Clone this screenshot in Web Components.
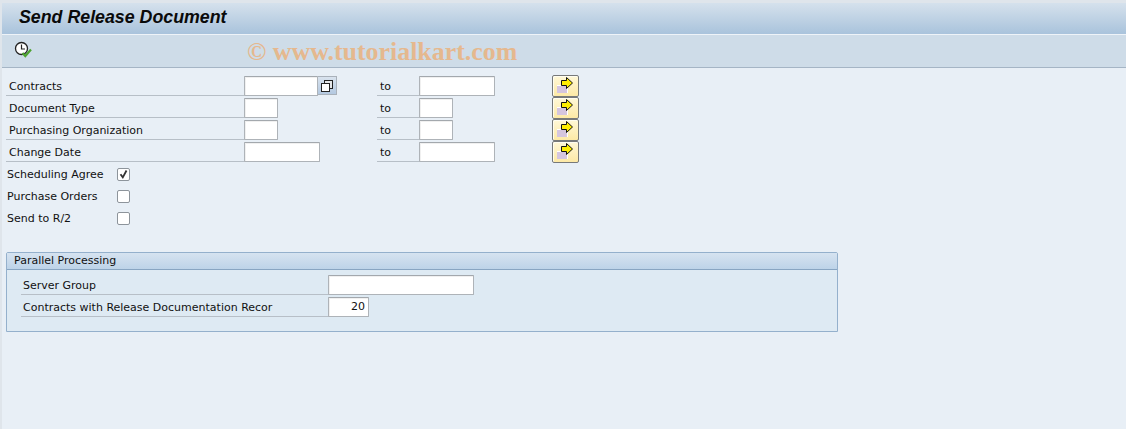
<!DOCTYPE html>
<html>
<head>
<meta charset="utf-8">
<style>
html, body { margin: 0; height: 100%; }
body {
  width: 1126px;
  height: 429px;
  overflow: hidden;
  background: #e8eff6;
  font: 11px "DejaVu Sans", sans-serif;
  color: #111;
}
</style>
</head>
<body>
<sap-screen>
  <sap-title slot="head">Send Release Document</sap-title>
  <sap-toolbar slot="head" mark="© www.tutorialkart.com"></sap-toolbar>

  <sap-range-row label="Contracts" low="74" high="76" multi></sap-range-row>
  <sap-range-row label="Document Type" low="34" high="34"></sap-range-row>
  <sap-range-row label="Purchasing Organization" low="34" high="34"></sap-range-row>
  <sap-range-row label="Change Date" low="76" high="76"></sap-range-row>

  <sap-check-row label="Scheduling Agree" checked></sap-check-row>
  <sap-check-row label="Purchase Orders"></sap-check-row>
  <sap-check-row label="Send to R/2"></sap-check-row>

  <sap-group heading="Parallel Processing">
    <sap-param-row label="Server Group" width="146"></sap-param-row>
    <sap-param-row label="Contracts with Release Documentation Recor" width="41" value="20"></sap-param-row>
  </sap-group>
</sap-screen>

<script>
class SapScreen extends HTMLElement {
  constructor() {
    super();
    this.attachShadow({mode: 'open'});
    this.shadowRoot.innerHTML = `
<style>
:host { display: flex; flex-direction: column; height: 429px; padding: 3px 0 0 2px; box-sizing: border-box; background: #dfe5eb; }
.body { flex: 1; background: #e8eff6; padding: 8px 0 0 4px; display: flex; flex-direction: column; }
</style>
<slot name="head"></slot>
<div class="body"><slot></slot></div>`;
  }
}

class SapTitle extends HTMLElement {
  constructor() {
    super();
    this.attachShadow({mode: 'open'});
    this.shadowRoot.innerHTML = `
<style>
:host {
  display: block;
  height: 32px;
  box-sizing: border-box;
  padding: 4px 0 0 17px;
  background: linear-gradient(#d5e1ec, #a9c3dc);
  border-bottom: 1px solid #eef3f8;
  font: italic bold 17.8px/20px "Liberation Sans", sans-serif;
  color: #0a0a0a;
}
</style>
<slot></slot>`;
  }
}

class SapToolbar extends HTMLElement {
  constructor() {
    super();
    this.attachShadow({mode: 'open'});
    this.shadowRoot.innerHTML = `
<style>
:host {
  display: flex;
  align-items: center;
  height: 33px;
  box-sizing: border-box;
  padding-left: 12px;
  background: #cedce8;
  border-bottom: 1px solid #a5b5c5;
}
svg { width: 18px; height: 18px; flex: none; margin-top: -2px; }
.mark {
  margin-left: 215px;
  font: bold 25.9px "Liberation Serif", serif;
  color: #e5b88e;
  white-space: nowrap;
  margin-top: 1px;
}
</style>
<svg viewBox="0 0 18 18">
  <circle cx="7.5" cy="7.5" r="6" fill="#fff" stroke="#222" stroke-width="1.3"/>
  <path d="M7.5 3.5V8H11" fill="none" stroke="#222" stroke-width="1.2"/>
  <path d="M8.5 12l2.8 3L17 8.5" fill="none" stroke="#4da32f" stroke-width="2.2"/>
</svg>
<span class="mark"></span>`;
    this.shadowRoot.querySelector('.mark').textContent = this.getAttribute('mark');
  }
}

class SapLabel extends HTMLElement {
  constructor() {
    super();
    this.attachShadow({mode: 'open'});
    this.shadowRoot.innerHTML = `
<style>
:host {
  display: block;
  box-sizing: border-box;
  height: 20px;
  padding: 3px 0 0 3px;
  border-bottom: 1px solid #b7bfc7;
  line-height: 16px;
  white-space: nowrap;
  overflow: hidden;
}
</style>
<slot></slot>`;
  }
}

class SapField extends HTMLElement {
  static get observedAttributes() { return ['width']; }

  constructor() {
    super();
    this.attachShadow({mode: 'open'});
    this.shadowRoot.innerHTML = `
<style>
:host {
  display: block;
  flex: none;
  box-sizing: border-box;
  height: 20px;
  background: #fff;
  border: 1px solid #aeb3b8;
  border-top-color: #a3a8ad;
  border-radius: 1px;
  box-shadow: inset 1px 1px 0 #f0f0f0;
  line-height: 18px;
  text-align: right;
  padding-right: 3px;
}
</style>
<slot></slot>`;
  }

  attributeChangedCallback(name, oldValue, value) {
    this.style.width = value + 'px';
  }
}

class SapMultiButton extends HTMLElement {
  constructor() {
    super();
    this.attachShadow({mode: 'open'});
    this.shadowRoot.innerHTML = `
<style>
:host {
  display: flex;
  flex: none;
  align-items: center;
  justify-content: center;
  box-sizing: border-box;
  width: 19px;
  height: 19px;
  background: linear-gradient(#d9e3ee, #b3c8e0);
  border: 1px solid #a9b1ba;
  border-left: 0;
}
svg { width: 12px; height: 12px; }
</style>
<svg viewBox="0 0 12 12">
  <rect x="3.5" y="0.5" width="8" height="8" fill="#e4e6e8" stroke="#222"/>
  <rect x="0.5" y="3.5" width="8" height="8" fill="#fff" stroke="#222"/>
</svg>`;
  }
}

class SapSelectButton extends HTMLElement {
  constructor() {
    super();
    this.attachShadow({mode: 'open'});
    this.shadowRoot.innerHTML = `
<style>
:host {
  display: block;
  box-sizing: border-box;
  width: 27px;
  height: 22px;
  background: linear-gradient(#fff8d8, #fde9a6);
  border: 1px solid #77797a;
  border-radius: 2px;
  box-shadow: inset 1px 1px 0 #fffdf0;
}
svg { display: block; width: 25px; height: 20px; }
</style>
<svg viewBox="0 0 25 20">
  <path d="M4 9H15V17H4Z" fill="#fff"/>
  <rect x="4" y="10" width="10" height="7" fill="#d5c5de"/>
  <path d="M8.5 4.5H13.5V1.5L19.5 7 13.5 12.5V9.5H8.5Z" fill="#ffee00" stroke="#111" stroke-width="1"/>
</svg>`;
  }
}

class SapRangeRow extends HTMLElement {
  constructor() {
    super();
    this.attachShadow({mode: 'open'});
    this.shadowRoot.innerHTML = `
<style>
:host {
  display: grid;
  grid-template-columns: 238px 133px 42px 133px 27px;
  height: 22px;
  align-items: start;
}
.low, .high { display: flex; }
sap-select-button { margin-top: -1px; }
</style>
<sap-label class="main"></sap-label>
<div class="low"></div>
<sap-label>to</sap-label>
<div class="high"></div>
<sap-select-button></sap-select-button>`;
    const root = this.shadowRoot;
    root.querySelector('.main').textContent = this.getAttribute('label');
    const low = document.createElement('sap-field');
    low.setAttribute('width', this.getAttribute('low'));
    root.querySelector('.low').appendChild(low);
    if (this.hasAttribute('multi')) {
      root.querySelector('.low').appendChild(document.createElement('sap-multi-button'));
    }
    const high = document.createElement('sap-field');
    high.setAttribute('width', this.getAttribute('high'));
    root.querySelector('.high').appendChild(high);
  }
}

class SapCheckRow extends HTMLElement {
  constructor() {
    super();
    this.attachShadow({mode: 'open'});
    this.shadowRoot.innerHTML = `
<style>
:host { display: flex; height: 22px; align-items: flex-start; }
.text { width: 111px; padding: 3px 0 0 1px; line-height: 16px; white-space: nowrap; box-sizing: border-box; }
.box {
  box-sizing: border-box;
  width: 13px;
  height: 13px;
  margin-top: 4px;
  background: #fff;
  border: 1px solid #8d949b;
  border-radius: 2px;
  display: flex;
}
svg { width: 11px; height: 11px; }
</style>
<span class="text"></span>
<span class="box"></span>`;
    this.shadowRoot.querySelector('.text').textContent = this.getAttribute('label');
    if (this.hasAttribute('checked')) {
      this.shadowRoot.querySelector('.box').innerHTML =
        '<svg viewBox="0 0 11 11"><path d="M2.5 5.2L4.8 8.4 8.5 1.5" fill="none" stroke="#333" stroke-width="1.8"/></svg>';
    }
  }
}

class SapGroup extends HTMLElement {
  constructor() {
    super();
    this.attachShadow({mode: 'open'});
    this.shadowRoot.innerHTML = `
<style>
:host {
  display: block;
  box-sizing: border-box;
  width: 832px;
  height: 80px;
  margin-top: 22px;
  background: #deeaf3;
  border: 1px solid #94b0cc;
  border-radius: 2px 2px 0 0;
}
.head {
  box-sizing: border-box;
  height: 17px;
  padding-left: 7px;
  background: linear-gradient(#d6e3f0, #bdd3e8);
  border-bottom: 1px solid #88a5c2;
  line-height: 16px;
}
.rows { padding: 5px 0 0 14px; }
</style>
<div class="head"></div>
<div class="rows"><slot></slot></div>`;
    this.shadowRoot.querySelector('.head').textContent = this.getAttribute('heading');
  }
}

class SapParamRow extends HTMLElement {
  constructor() {
    super();
    this.attachShadow({mode: 'open'});
    this.shadowRoot.innerHTML = `
<style>
:host { display: flex; height: 22px; align-items: flex-start; }
sap-label { width: 307px; flex: none; padding-left: 2px; }
</style>
<sap-label></sap-label>
<sap-field></sap-field>`;
    const root = this.shadowRoot;
    root.querySelector('sap-label').textContent = this.getAttribute('label');
    const field = root.querySelector('sap-field');
    field.setAttribute('width', this.getAttribute('width'));
    field.textContent = this.getAttribute('value') || '';
  }
}

// children first so the fields read their attributes when they get built
customElements.define('sap-label', SapLabel);
customElements.define('sap-field', SapField);
customElements.define('sap-multi-button', SapMultiButton);
customElements.define('sap-select-button', SapSelectButton);
customElements.define('sap-title', SapTitle);
customElements.define('sap-toolbar', SapToolbar);
customElements.define('sap-range-row', SapRangeRow);
customElements.define('sap-check-row', SapCheckRow);
customElements.define('sap-param-row', SapParamRow);
customElements.define('sap-group', SapGroup);
customElements.define('sap-screen', SapScreen);
</script>
</body>
</html>
